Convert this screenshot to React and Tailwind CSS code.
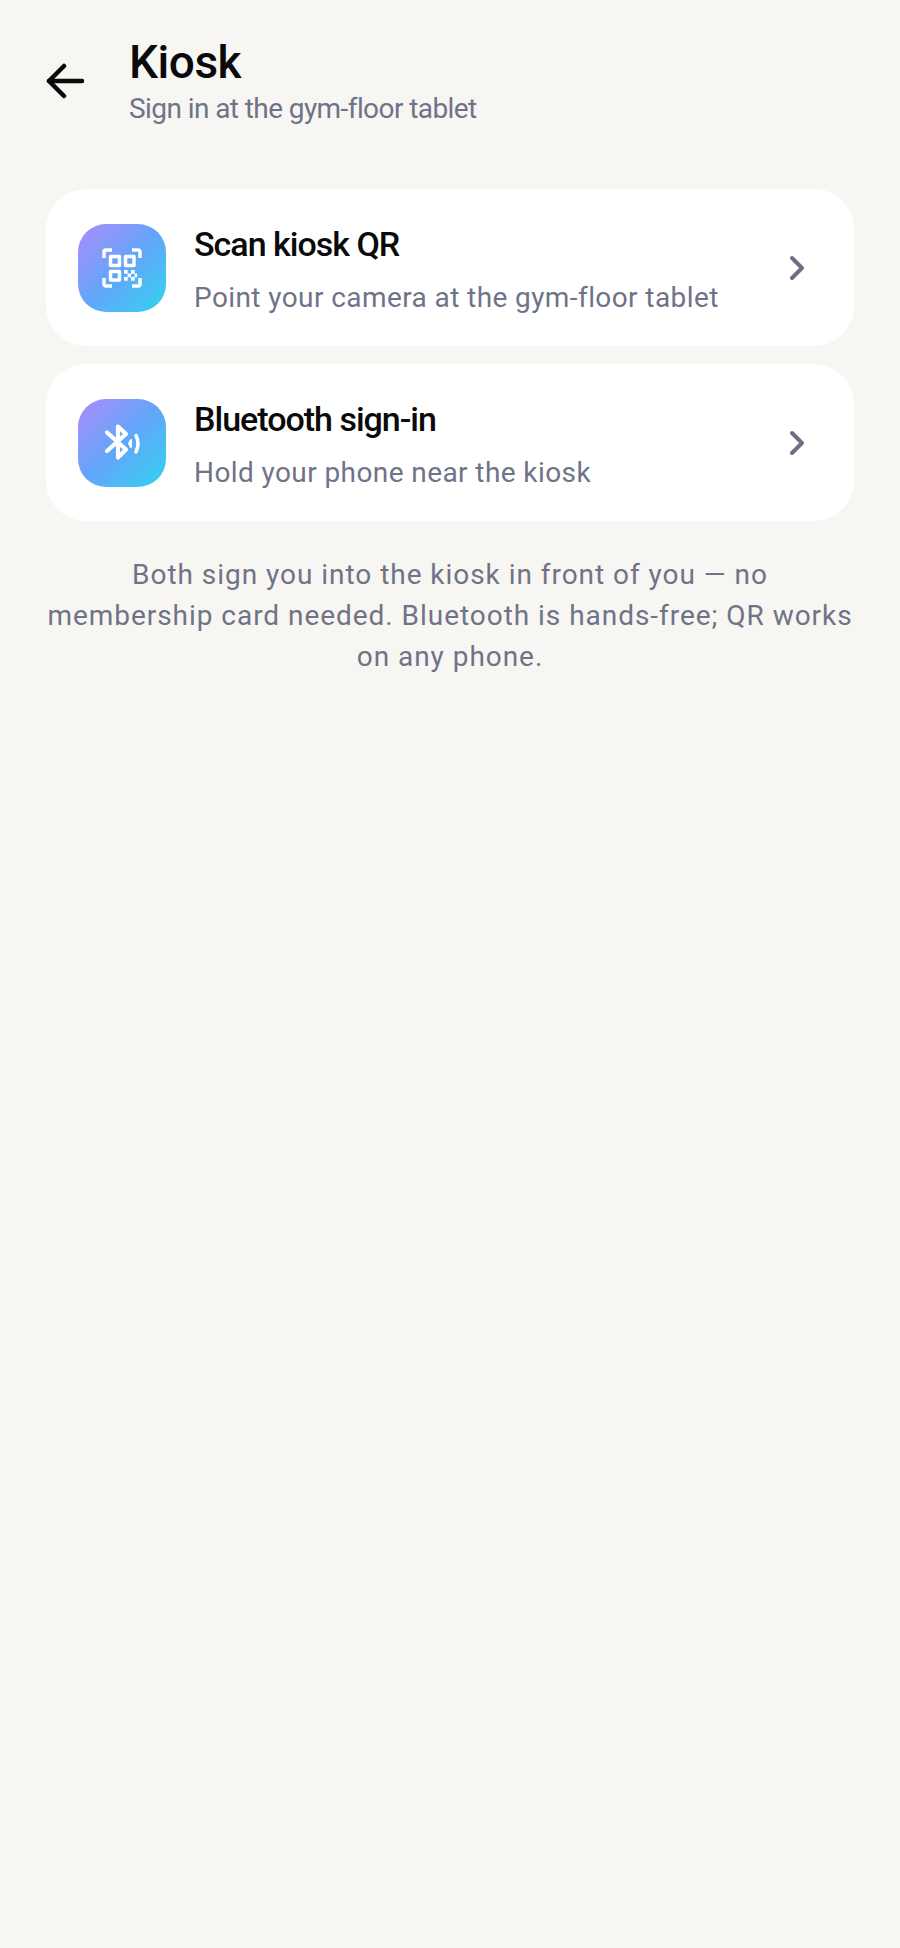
import React from "react";

function QrIcon() {
  return (
    <svg width="40" height="40" viewBox="0 0 40 40" fill="none" stroke="#fff" strokeWidth="3.5" strokeLinecap="butt" strokeLinejoin="round">
      <path d="M2 10V4a2 2 0 0 1 2-2h6" />
      <path d="M30 2h6a2 2 0 0 1 2 2v6" />
      <path d="M38 30v6a2 2 0 0 1-2 2h-6" />
      <path d="M10 38H4a2 2 0 0 1-2-2v-6" />
      <rect x="8.500" y="8.500" width="9" height="9" />
      <rect x="23.500" y="8.500" width="8.500" height="9" />
      <rect x="8.500" y="23.500" width="9" height="8.500" />
      <g fill="#fff" stroke="none">
        <rect x="22" y="22" width="3.700" height="3.700" />
        <rect x="29" y="22" width="3.700" height="3.700" />
        <rect x="25.500" y="25.500" width="3.700" height="3.700" />
        <rect x="32.500" y="25.500" width="2.700" height="3.700" />
        <rect x="22" y="29" width="3.700" height="3.700" />
        <rect x="29" y="29" width="3.700" height="3.700" />
      </g>
    </svg>
  );
}

function BtIcon() {
  return (
    <svg width="40" height="40" viewBox="0 0 40 40" fill="none" stroke="#fff" strokeLinecap="round" strokeLinejoin="round">
      <path strokeWidth="4.200" d="M5 9.500l19 17-8 8V3.500L24 11 5 28" />
      <path strokeWidth="2" d="M29 17l-2 3.500 2 3.500z" fill="#fff" />
      <path strokeWidth="3.500" d="M34 12.500c2.500 5 2.500 11 0 16.500" />
    </svg>
  );
}

function Card({ icon, title, sub }) {
  return (
    <div className="flex h-[157px] items-center rounded-[40px] bg-white pl-8 pr-[45px]">
      <div className="flex h-[88px] w-[88px] shrink-0 items-center justify-center rounded-[28px] bg-gradient-to-br from-[#a78bfa] via-[#60a5fa] to-[#22d3ee]">
        {icon}
      </div>
      <div className="ml-7 flex-1 pt-[5px]">
        <div className="text-[34px] leading-[44px] font-medium tracking-[-1px] text-[#0a0a0a]">{title}</div>
        <div className="mt-[12px] text-[28px] leading-[40px] tracking-[0.41px] text-[#6f7388]">{sub}</div>
      </div>
      <svg width="24" height="28" viewBox="0 0 24 28" fill="none" stroke="#6b7085" strokeWidth="4" strokeLinecap="round" strokeLinejoin="round">
        <path d="M7 4l10 10L7 24" />
      </svg>
    </div>
  );
}

export default function App() {
  return (
    <div className="min-h-[1948px] bg-[#f7f6f2] px-[46px] font-['Roboto',sans-serif]">
      <header className="flex items-center pt-[32px]">
        <svg width="40" height="40" viewBox="0 0 40 40" fill="none" stroke="#0a0a0a" strokeWidth="4.500" strokeLinecap="round" strokeLinejoin="round" className="mt-[4px] shrink-0">
          <path d="M36 20H3" />
          <path d="M18 5L3 20l15 15" />
        </svg>
        <div className="ml-[43px]">
          <div className="text-[46px] leading-[60px] font-medium tracking-[-0.5px] text-[#0a0a0a]">Kiosk</div>
          <div className="text-[28px] leading-[33px] tracking-[-0.58px] text-[#6f7388]">Sign in at the gym-floor tablet</div>
        </div>
      </header>
      <div className="mt-[64px] flex flex-col gap-[18px]">
        <Card icon={<QrIcon />} title="Scan kiosk QR" sub="Point your camera at the gym-floor tablet" />
        <Card icon={<BtIcon />} title="Bluetooth sign-in" sub="Hold your phone near the kiosk" />
      </div>
      <p className="mt-[33px] text-center text-[28px] leading-[41px] tracking-[0.96px] text-[#6f7388]">
        Both sign you into the kiosk in front of you — no<br />membership card needed. Bluetooth is hands-free; QR works<br />on any phone.
      </p>
    </div>
  );
}
